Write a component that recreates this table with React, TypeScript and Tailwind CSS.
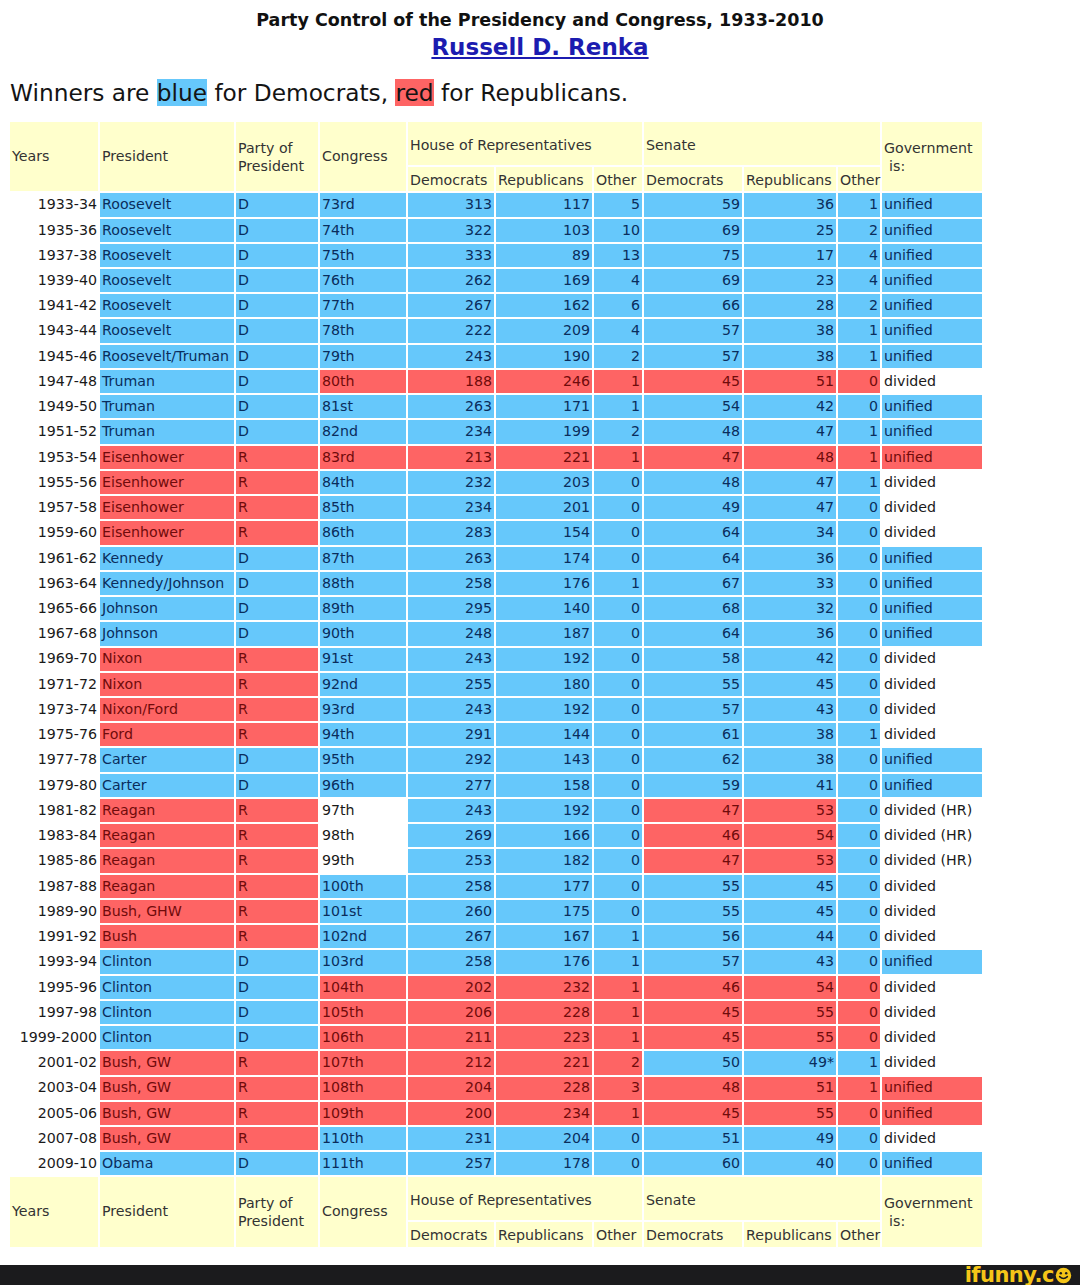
import React from 'react';

type Row = {
  y: string;
  p: string;
  pt: string;
  c: string;
  h: string[];
  s: string[];
  g: string;
  // colours: president, congress, house, senate, senate other, government
  col: string;
};

const rows: Row[] = [
  { y: '1933-34', p: 'Roosevelt', pt: 'D', c: '73rd', h: ['313', '117', '5'], s: ['59', '36', '1'], g: 'unified', col: 'bbbbbb' },
  { y: '1935-36', p: 'Roosevelt', pt: 'D', c: '74th', h: ['322', '103', '10'], s: ['69', '25', '2'], g: 'unified', col: 'bbbbbb' },
  { y: '1937-38', p: 'Roosevelt', pt: 'D', c: '75th', h: ['333', '89', '13'], s: ['75', '17', '4'], g: 'unified', col: 'bbbbbb' },
  { y: '1939-40', p: 'Roosevelt', pt: 'D', c: '76th', h: ['262', '169', '4'], s: ['69', '23', '4'], g: 'unified', col: 'bbbbbb' },
  { y: '1941-42', p: 'Roosevelt', pt: 'D', c: '77th', h: ['267', '162', '6'], s: ['66', '28', '2'], g: 'unified', col: 'bbbbbb' },
  { y: '1943-44', p: 'Roosevelt', pt: 'D', c: '78th', h: ['222', '209', '4'], s: ['57', '38', '1'], g: 'unified', col: 'bbbbbb' },
  { y: '1945-46', p: 'Roosevelt/Truman', pt: 'D', c: '79th', h: ['243', '190', '2'], s: ['57', '38', '1'], g: 'unified', col: 'bbbbbb' },
  { y: '1947-48', p: 'Truman', pt: 'D', c: '80th', h: ['188', '246', '1'], s: ['45', '51', '0'], g: 'divided', col: 'brrrrw' },
  { y: '1949-50', p: 'Truman', pt: 'D', c: '81st', h: ['263', '171', '1'], s: ['54', '42', '0'], g: 'unified', col: 'bbbbbb' },
  { y: '1951-52', p: 'Truman', pt: 'D', c: '82nd', h: ['234', '199', '2'], s: ['48', '47', '1'], g: 'unified', col: 'bbbbbb' },
  { y: '1953-54', p: 'Eisenhower', pt: 'R', c: '83rd', h: ['213', '221', '1'], s: ['47', '48', '1'], g: 'unified', col: 'rrrrrr' },
  { y: '1955-56', p: 'Eisenhower', pt: 'R', c: '84th', h: ['232', '203', '0'], s: ['48', '47', '1'], g: 'divided', col: 'rbbbbw' },
  { y: '1957-58', p: 'Eisenhower', pt: 'R', c: '85th', h: ['234', '201', '0'], s: ['49', '47', '0'], g: 'divided', col: 'rbbbbw' },
  { y: '1959-60', p: 'Eisenhower', pt: 'R', c: '86th', h: ['283', '154', '0'], s: ['64', '34', '0'], g: 'divided', col: 'rbbbbw' },
  { y: '1961-62', p: 'Kennedy', pt: 'D', c: '87th', h: ['263', '174', '0'], s: ['64', '36', '0'], g: 'unified', col: 'bbbbbb' },
  { y: '1963-64', p: 'Kennedy/Johnson', pt: 'D', c: '88th', h: ['258', '176', '1'], s: ['67', '33', '0'], g: 'unified', col: 'bbbbbb' },
  { y: '1965-66', p: 'Johnson', pt: 'D', c: '89th', h: ['295', '140', '0'], s: ['68', '32', '0'], g: 'unified', col: 'bbbbbb' },
  { y: '1967-68', p: 'Johnson', pt: 'D', c: '90th', h: ['248', '187', '0'], s: ['64', '36', '0'], g: 'unified', col: 'bbbbbb' },
  { y: '1969-70', p: 'Nixon', pt: 'R', c: '91st', h: ['243', '192', '0'], s: ['58', '42', '0'], g: 'divided', col: 'rbbbbw' },
  { y: '1971-72', p: 'Nixon', pt: 'R', c: '92nd', h: ['255', '180', '0'], s: ['55', '45', '0'], g: 'divided', col: 'rbbbbw' },
  { y: '1973-74', p: 'Nixon/Ford', pt: 'R', c: '93rd', h: ['243', '192', '0'], s: ['57', '43', '0'], g: 'divided', col: 'rbbbbw' },
  { y: '1975-76', p: 'Ford', pt: 'R', c: '94th', h: ['291', '144', '0'], s: ['61', '38', '1'], g: 'divided', col: 'rbbbbw' },
  { y: '1977-78', p: 'Carter', pt: 'D', c: '95th', h: ['292', '143', '0'], s: ['62', '38', '0'], g: 'unified', col: 'bbbbbb' },
  { y: '1979-80', p: 'Carter', pt: 'D', c: '96th', h: ['277', '158', '0'], s: ['59', '41', '0'], g: 'unified', col: 'bbbbbb' },
  { y: '1981-82', p: 'Reagan', pt: 'R', c: '97th', h: ['243', '192', '0'], s: ['47', '53', '0'], g: 'divided (HR)', col: 'rwbrbw' },
  { y: '1983-84', p: 'Reagan', pt: 'R', c: '98th', h: ['269', '166', '0'], s: ['46', '54', '0'], g: 'divided (HR)', col: 'rwbrbw' },
  { y: '1985-86', p: 'Reagan', pt: 'R', c: '99th', h: ['253', '182', '0'], s: ['47', '53', '0'], g: 'divided (HR)', col: 'rwbrbw' },
  { y: '1987-88', p: 'Reagan', pt: 'R', c: '100th', h: ['258', '177', '0'], s: ['55', '45', '0'], g: 'divided', col: 'rbbbbw' },
  { y: '1989-90', p: 'Bush, GHW', pt: 'R', c: '101st', h: ['260', '175', '0'], s: ['55', '45', '0'], g: 'divided', col: 'rbbbbw' },
  { y: '1991-92', p: 'Bush', pt: 'R', c: '102nd', h: ['267', '167', '1'], s: ['56', '44', '0'], g: 'divided', col: 'rbbbbw' },
  { y: '1993-94', p: 'Clinton', pt: 'D', c: '103rd', h: ['258', '176', '1'], s: ['57', '43', '0'], g: 'unified', col: 'bbbbbb' },
  { y: '1995-96', p: 'Clinton', pt: 'D', c: '104th', h: ['202', '232', '1'], s: ['46', '54', '0'], g: 'divided', col: 'brrrrw' },
  { y: '1997-98', p: 'Clinton', pt: 'D', c: '105th', h: ['206', '228', '1'], s: ['45', '55', '0'], g: 'divided', col: 'brrrrw' },
  { y: '1999-2000', p: 'Clinton', pt: 'D', c: '106th', h: ['211', '223', '1'], s: ['45', '55', '0'], g: 'divided', col: 'brrrrw' },
  { y: '2001-02', p: 'Bush, GW', pt: 'R', c: '107th', h: ['212', '221', '2'], s: ['50', '49*', '1'], g: 'divided', col: 'rrrbbw' },
  { y: '2003-04', p: 'Bush, GW', pt: 'R', c: '108th', h: ['204', '228', '3'], s: ['48', '51', '1'], g: 'unified', col: 'rrrrrr' },
  { y: '2005-06', p: 'Bush, GW', pt: 'R', c: '109th', h: ['200', '234', '1'], s: ['45', '55', '0'], g: 'unified', col: 'rrrrrr' },
  { y: '2007-08', p: 'Bush, GW', pt: 'R', c: '110th', h: ['231', '204', '0'], s: ['51', '49', '0'], g: 'divided', col: 'rbbbbw' },
  { y: '2009-10', p: 'Obama', pt: 'D', c: '111th', h: ['257', '178', '0'], s: ['60', '40', '0'], g: 'unified', col: 'bbbbbb' },
];

const tone = (k: string) =>
  k === 'b' ? 'bg-[#66c8fb] text-[#0a2d5c]' : k === 'r' ? 'bg-[#fe6464] text-[#700b0b]' : 'bg-white text-[#1a1a1a]';

const HeadRows: React.FC = () => (
  <>
    <tr className="h-[43px]">
      <th rowSpan={2} className="bg-[#ffffcc] px-[2px] text-left font-normal">Years</th>
      <th rowSpan={2} className="bg-[#ffffcc] px-[2px] text-left font-normal">President</th>
      <th rowSpan={2} className="bg-[#ffffcc] px-[2px] text-left font-normal leading-[18px]">
        Party of
        <br />
        President
      </th>
      <th rowSpan={2} className="bg-[#ffffcc] px-[2px] text-left font-normal">Congress</th>
      <th colSpan={3} className="bg-[#ffffcc] px-[2px] pt-[4px] text-left font-normal">
        House of Representatives
      </th>
      <th colSpan={3} className="bg-[#ffffcc] px-[2px] pt-[4px] text-left font-normal">
        Senate
      </th>
      <th rowSpan={2} className="bg-[#ffffcc] px-[2px] text-left font-normal leading-[18px]">
        Government
        <br />
        <span className="pl-[5px]">is:</span>
      </th>
    </tr>
    <tr className="h-[23px]">
      {['Democrats', 'Republicans', 'Other', 'Democrats', 'Republicans', 'Other'].map((t, i) => (
        <th key={i} className="bg-[#ffffcc] px-[2px] pt-[3px] text-left font-normal">
          {t}
        </th>
      ))}
    </tr>
  </>
);

export default function App() {
  return (
    <div className="flex h-[1285px] w-[1080px] flex-col overflow-hidden bg-white font-['DejaVu_Sans',sans-serif] text-[#111]">
      <div className="pt-[9px] text-center text-[17.5px] font-bold leading-[22px]">
        Party Control of the Presidency and Congress, 1933-2010
      </div>
      <div className="mt-[2px] text-center leading-[28px]">
        <a className="text-[23px] font-bold text-[#1c1cb0] underline">Russell D. Renka</a>
      </div>
      <p className="mt-[14px] pl-[10px] text-[23.25px] leading-[30px] text-[#141414]">
        Winners are <span className="bg-[#66c8fb]">blue</span> for Democrats,{' '}
        <span className="bg-[#fe6464]">red</span> for Republicans.
      </p>

      <table className="ml-[8px] mt-[12px] w-[976px] table-fixed border-separate border-spacing-[2px] text-[14.2px] text-[#333]">
        <colgroup>
          <col className="w-[88px]" />
          <col className="w-[134px]" />
          <col className="w-[82px]" />
          <col className="w-[86px]" />
          <col className="w-[86px]" />
          <col className="w-[96px]" />
          <col className="w-[48px]" />
          <col className="w-[98px]" />
          <col className="w-[92px]" />
          <col className="w-[42px]" />
          <col className="w-[100px]" />
        </colgroup>
        <thead>
          <HeadRows />
        </thead>
        <tbody>
          {rows.map(r => {
            const [pc, cc, hc, sc, oc, gc] = r.col.split('');
            return (
              <tr key={r.y} className="h-[23.24px] whitespace-nowrap">
                <td className="px-[1px] text-right text-[#1a1a1a]">{r.y}</td>
                <td className={`px-[2px] ${tone(pc)}`}>{r.p}</td>
                <td className={`px-[2px] ${tone(pc)}`}>{r.pt}</td>
                <td className={`px-[2px] ${tone(cc)}`}>{r.c}</td>
                {r.h.map((v, i) => (
                  <td key={i} className={`px-[2px] text-right ${tone(hc)}`}>
                    {v}
                  </td>
                ))}
                <td className={`px-[2px] text-right ${tone(sc)}`}>{r.s[0]}</td>
                <td className={`px-[2px] text-right ${tone(sc)}`}>{r.s[1]}</td>
                <td className={`px-[2px] text-right ${tone(oc)}`}>{r.s[2]}</td>
                <td className={`px-[2px] ${tone(gc)}`}>{r.g}</td>
              </tr>
            );
          })}
        </tbody>
        <tfoot>
          <HeadRows />
        </tfoot>
      </table>

      <div className="mt-auto flex h-[20px] items-center justify-end overflow-hidden bg-[#1b1b1d] pr-[8px]">
        <span className="flex items-center font-['DejaVu_Sans',sans-serif] text-[21px] font-bold leading-[20px] tracking-[-0.5px] text-[#f5c518]">
          ifunny.c
          <svg width="17" height="17" viewBox="0 0 22 22" className="ml-[1px]">
            <circle cx="11" cy="11" r="10" fill="#f5c518" />
            <circle cx="7.5" cy="8" r="1.6" fill="#1b1b1d" />
            <circle cx="14.5" cy="8" r="1.6" fill="#1b1b1d" />
            <path d="M6 12.5 Q11 17.5 16 12.5" stroke="#1b1b1d" strokeWidth="2" fill="none" strokeLinecap="round" />
          </svg>
        </span>
      </div>
    </div>
  );
}
